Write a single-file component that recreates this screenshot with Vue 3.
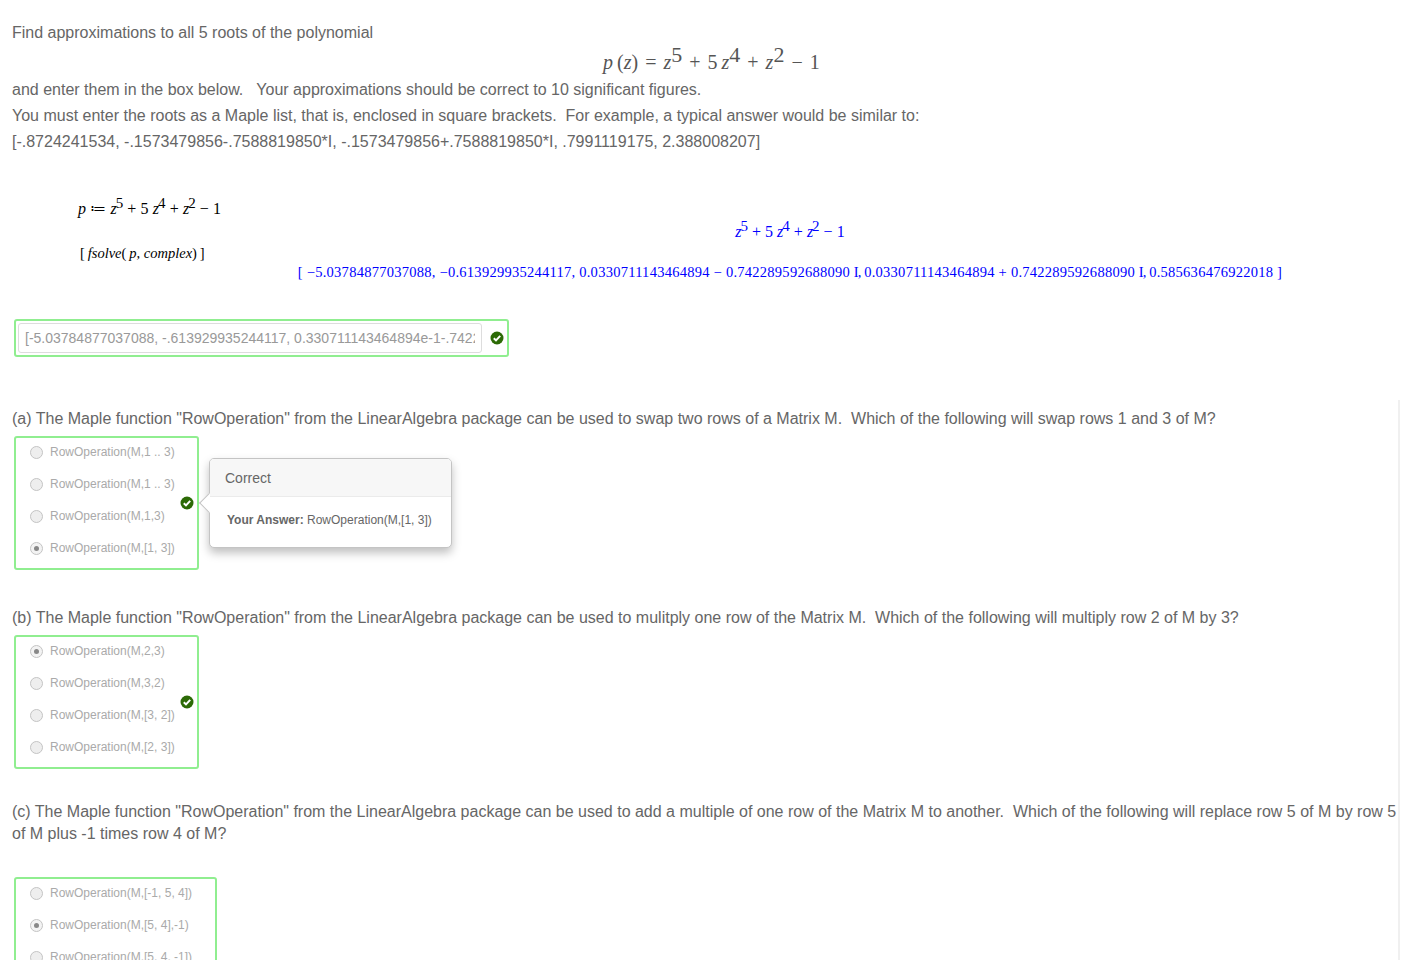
<script setup>
const questions = [
  {
    id: 'a',
    lines: ['(a) The Maple function "RowOperation" from the LinearAlgebra package can be used to swap two rows of a Matrix M.\u00a0 Which of the following will swap rows 1 and 3 of M?'],
    options: ['RowOperation(M,1 .. 3)', 'RowOperation(M,1 .. 3)', 'RowOperation(M,1,3)', 'RowOperation(M,[1, 3])'],
    selected: 3,
    popover: true,
    mod: 'q-a',
  },
  {
    id: 'b',
    lines: ['(b) The Maple function "RowOperation" from the LinearAlgebra package can be used to mulitply one row of the Matrix M.\u00a0 Which of the following will multiply row 2 of M by 3?'],
    options: ['RowOperation(M,2,3)', 'RowOperation(M,3,2)', 'RowOperation(M,[3, 2])', 'RowOperation(M,[2, 3])'],
    selected: 0,
    mod: 'q-b',
  },
  {
    id: 'c',
    lines: [
      '(c) The Maple function "RowOperation" from the LinearAlgebra package can be used to add a multiple of one row of the Matrix M to another.\u00a0 Which of the following will replace row 5 of M by row 5',
      'of M plus -1 times row 4 of M?',
    ],
    options: ['RowOperation(M,[-1, 5, 4])', 'RowOperation(M,[5, 4],-1)', 'RowOperation(M,[5, 4, -1])'],
    selected: 1,
    wide: true,
    noCheck: true,
    mod: 'q-c',
  },
]
</script>

<template>
  <div class="page">
    <div class="rule"></div>
    <p class="line first">Find approximations to all 5 roots of the polynomial</p>
    <div class="display-eq">
      <i>p</i>&#8201;(<i>z</i>) = <i>z</i><sup>5</sup> + 5&#8201;<i>z</i><sup>4</sup> + <i>z</i><sup>2</sup> − 1
    </div>
    <p class="line">and enter them in the box below.&nbsp;&nbsp; Your approximations should be correct to 10 significant figures.</p>
    <p class="line">You must enter the roots as a Maple list, that is, enclosed in square brackets.&nbsp; For example, a typical answer would be similar to:</p>
    <p class="line">[-.8724241534, -.1573479856-.7588819850*I, -.1573479856+.7588819850*I, .7991119175, 2.388008207]</p>

    <div class="maple">
      <div class="maple-row row-input">
        <div class="maple-in"><i>p</i> ≔ <i>z</i><sup>5</sup> + 5 <i>z</i><sup>4</sup> + <i>z</i><sup>2</sup> − 1</div>
      </div>
      <div class="maple-out out-poly"><i>z</i><sup>5</sup> + 5 <i>z</i><sup>4</sup> + <i>z</i><sup>2</sup> − 1</div>
      <div class="maple-row row-solve">
        <div class="maple-in">[&#8201;<i>fsolve</i>(&#8201;<i>p, complex</i>)&#8201;]</div>
      </div>
      <div class="maple-out out-roots">[ −5.03784877037088, −0.613929935244117, 0.0330711143464894 − 0.742289592688090 <span class="upright">I,</span> 0.0330711143464894 + 0.742289592688090 <span class="upright">I,</span> 0.585636476922018 ]</div>
    </div>

    <div class="answer-box">
      <input class="answer-input" readonly value="[-5.03784877037088, -.613929935244117, 0.330711143464894e-1-.742289592688090*I, 0.330711143464894e-1+.742289592688090*I, .585636476922018]" />
      <svg class="check inline-check" viewBox="0 0 14 14" aria-hidden="true">
        <circle cx="7" cy="7" r="6.5" fill="#2c6a06" />
        <path d="M3.8 7.2 L6 9.4 L10.2 4.9" fill="none" stroke="#fff" stroke-width="2" />
      </svg>
    </div>

    <section v-for="q in questions" :key="q.id" class="question" :class="q.mod">
      <p v-for="(l, i) in q.lines" :key="i" class="line">{{ l }}</p>
      <div class="choice-box" :class="{ wide: q.wide }">
        <div class="option-list">
          <label v-for="(o, i) in q.options" :key="i" class="option">
            <span class="radio" :class="{ on: i === q.selected }"></span>
            <span>{{ o }}</span>
          </label>
        </div>
        <svg v-if="!q.noCheck" class="check box-check" viewBox="0 0 14 14" aria-hidden="true">
          <circle cx="7" cy="7" r="6.5" fill="#2c6a06" />
          <path d="M3.8 7.2 L6 9.4 L10.2 4.9" fill="none" stroke="#fff" stroke-width="2" />
        </svg>
        <div v-if="q.popover" class="popover">
          <span class="arrow"></span>
          <div class="pop-head">Correct</div>
          <div class="pop-body"><b>Your Answer:</b> RowOperation(M,[1, 3])</div>
        </div>
      </div>
    </section>
  </div>
</template>

<style>
html, body { margin: 0; overflow: hidden; background: #fff; }
</style>

<style scoped>
.page {
  position: relative;
  height: 960px;
  overflow: hidden;
  box-sizing: border-box;
  padding: 20px 0 0 12px;
  background: #fff;
  color: #666;
  font-family: "Liberation Sans", Arial, sans-serif;
  font-size: 16px;
}
.rule {
  position: absolute;
  left: 1398px;
  top: 400px;
  bottom: 0;
  width: 2px;
  background: #f0f0f0;
}
.line {
  margin: 0;
  height: 26px;
  line-height: 26px;
  white-space: nowrap;
}
.display-eq {
  height: 31px;
  line-height: 33px;
  padding-left: 591px;
  font-family: "Liberation Serif", serif;
  font-size: 20px;
  word-spacing: 2px;
  color: #555;
  white-space: pre;
}
.display-eq sup { font-size: 22px; line-height: 0; vertical-align: 7px; }
.maple {
  height: 149px;
  margin-top: 14px;
  font-family: "Liberation Serif", serif;
  font-size: 16px;
}
.maple sup { font-size: 15px; line-height: 0; vertical-align: 6px; margin-left: -1px; }
.maple-row { padding-left: 66px; color: #000; }
.maple-in { white-space: pre; }
.row-input { height: 18px; padding-top: 31px; line-height: 18px; word-spacing: 0.2px; }
.row-solve { height: 20px; line-height: 20px; padding-left: 68px; font-size: 14.5px; }
.maple-out {
  color: #0000ff;
  text-align: center;
  white-space: nowrap;
  width: 1556px;
  line-height: 18px;
}
.out-poly { height: 20px; margin-top: 5px; }
.out-roots { height: 18px; margin-top: 0; font-size: 14.5px; letter-spacing: 0.26px; }
.upright { letter-spacing: -1px; }
.answer-box {
  box-sizing: border-box;
  width: 495px;
  height: 38px;
  margin-left: 2px;
  margin-top: 1px;
  padding: 2px;
  display: flex;
  align-items: center;
  border: 2px solid #90ee90;
  border-radius: 3px;
}
.answer-input {
  box-sizing: border-box;
  width: 464px;
  height: 30px;
  padding: 0 6px;
  border: 1px solid #ddd;
  border-radius: 3px;
  color: #999;
  background: #fff;
  font-family: "Liberation Sans", Arial, sans-serif;
  font-size: 14px;
  outline: none;
}
.check { display: block; width: 14px; height: 14px; }
.inline-check { margin-left: 8px; }
.q-a { margin-top: 49px; }
.q-b { margin-top: 35px; }
.q-c { margin-top: 32px; }
.q-c .line { height: 22px; line-height: 22px; }
.choice-box {
  position: relative;
  box-sizing: border-box;
  width: 185px;
  margin: 4px 0 0 2px;
  padding-bottom: 4px;
  border: 2px solid #90ee90;
  border-radius: 3px;
}
.q-c .choice-box { margin-top: 32px; }
.choice-box.wide { width: 203px; }
.option-list { margin-top: -2px; }
.option {
  display: flex;
  align-items: center;
  height: 32px;
  padding-left: 14px;
  color: #aaa;
  font-size: 12px;
  white-space: nowrap;
}
.radio {
  position: relative;
  box-sizing: border-box;
  width: 13px;
  height: 13px;
  margin-right: 7px;
  border: 1px solid #c4c4c4;
  border-radius: 50%;
  background: #eee;
}
.radio.on { background: #f3f3f3; }
.radio.on::after {
  content: "";
  position: absolute;
  left: 3px;
  top: 3px;
  width: 5px;
  height: 5px;
  border-radius: 50%;
  background: #888;
}
.box-check { position: absolute; left: 164px; top: 58px; }
.popover {
  position: absolute;
  left: 193px;
  top: 20px;
  box-sizing: border-box;
  width: 243px;
  height: 90px;
  background: #fff;
  border: 1px solid #c4c4c4;
  border-radius: 5px;
  box-shadow: 0 5px 10px rgba(0, 0, 0, 0.25);
}
.arrow {
  position: absolute;
  left: -8px;
  top: 37px;
  width: 14px;
  height: 14px;
  box-sizing: border-box;
  background: #fff;
  border-left: 1px solid #c4c4c4;
  border-bottom: 1px solid #c4c4c4;
  transform: rotate(45deg);
}
.pop-head {
  position: relative;
  box-sizing: border-box;
  height: 38px;
  padding-left: 15px;
  line-height: 38px;
  font-size: 14px;
  color: #666;
  background: #f7f7f7;
  border-bottom: 1px solid #ebebeb;
  border-radius: 4px 4px 0 0;
}
.pop-body {
  position: relative;
  padding: 14px 0 0 17px;
  font-size: 12px;
  line-height: 18px;
  color: #666;
  white-space: nowrap;
}
</style>
